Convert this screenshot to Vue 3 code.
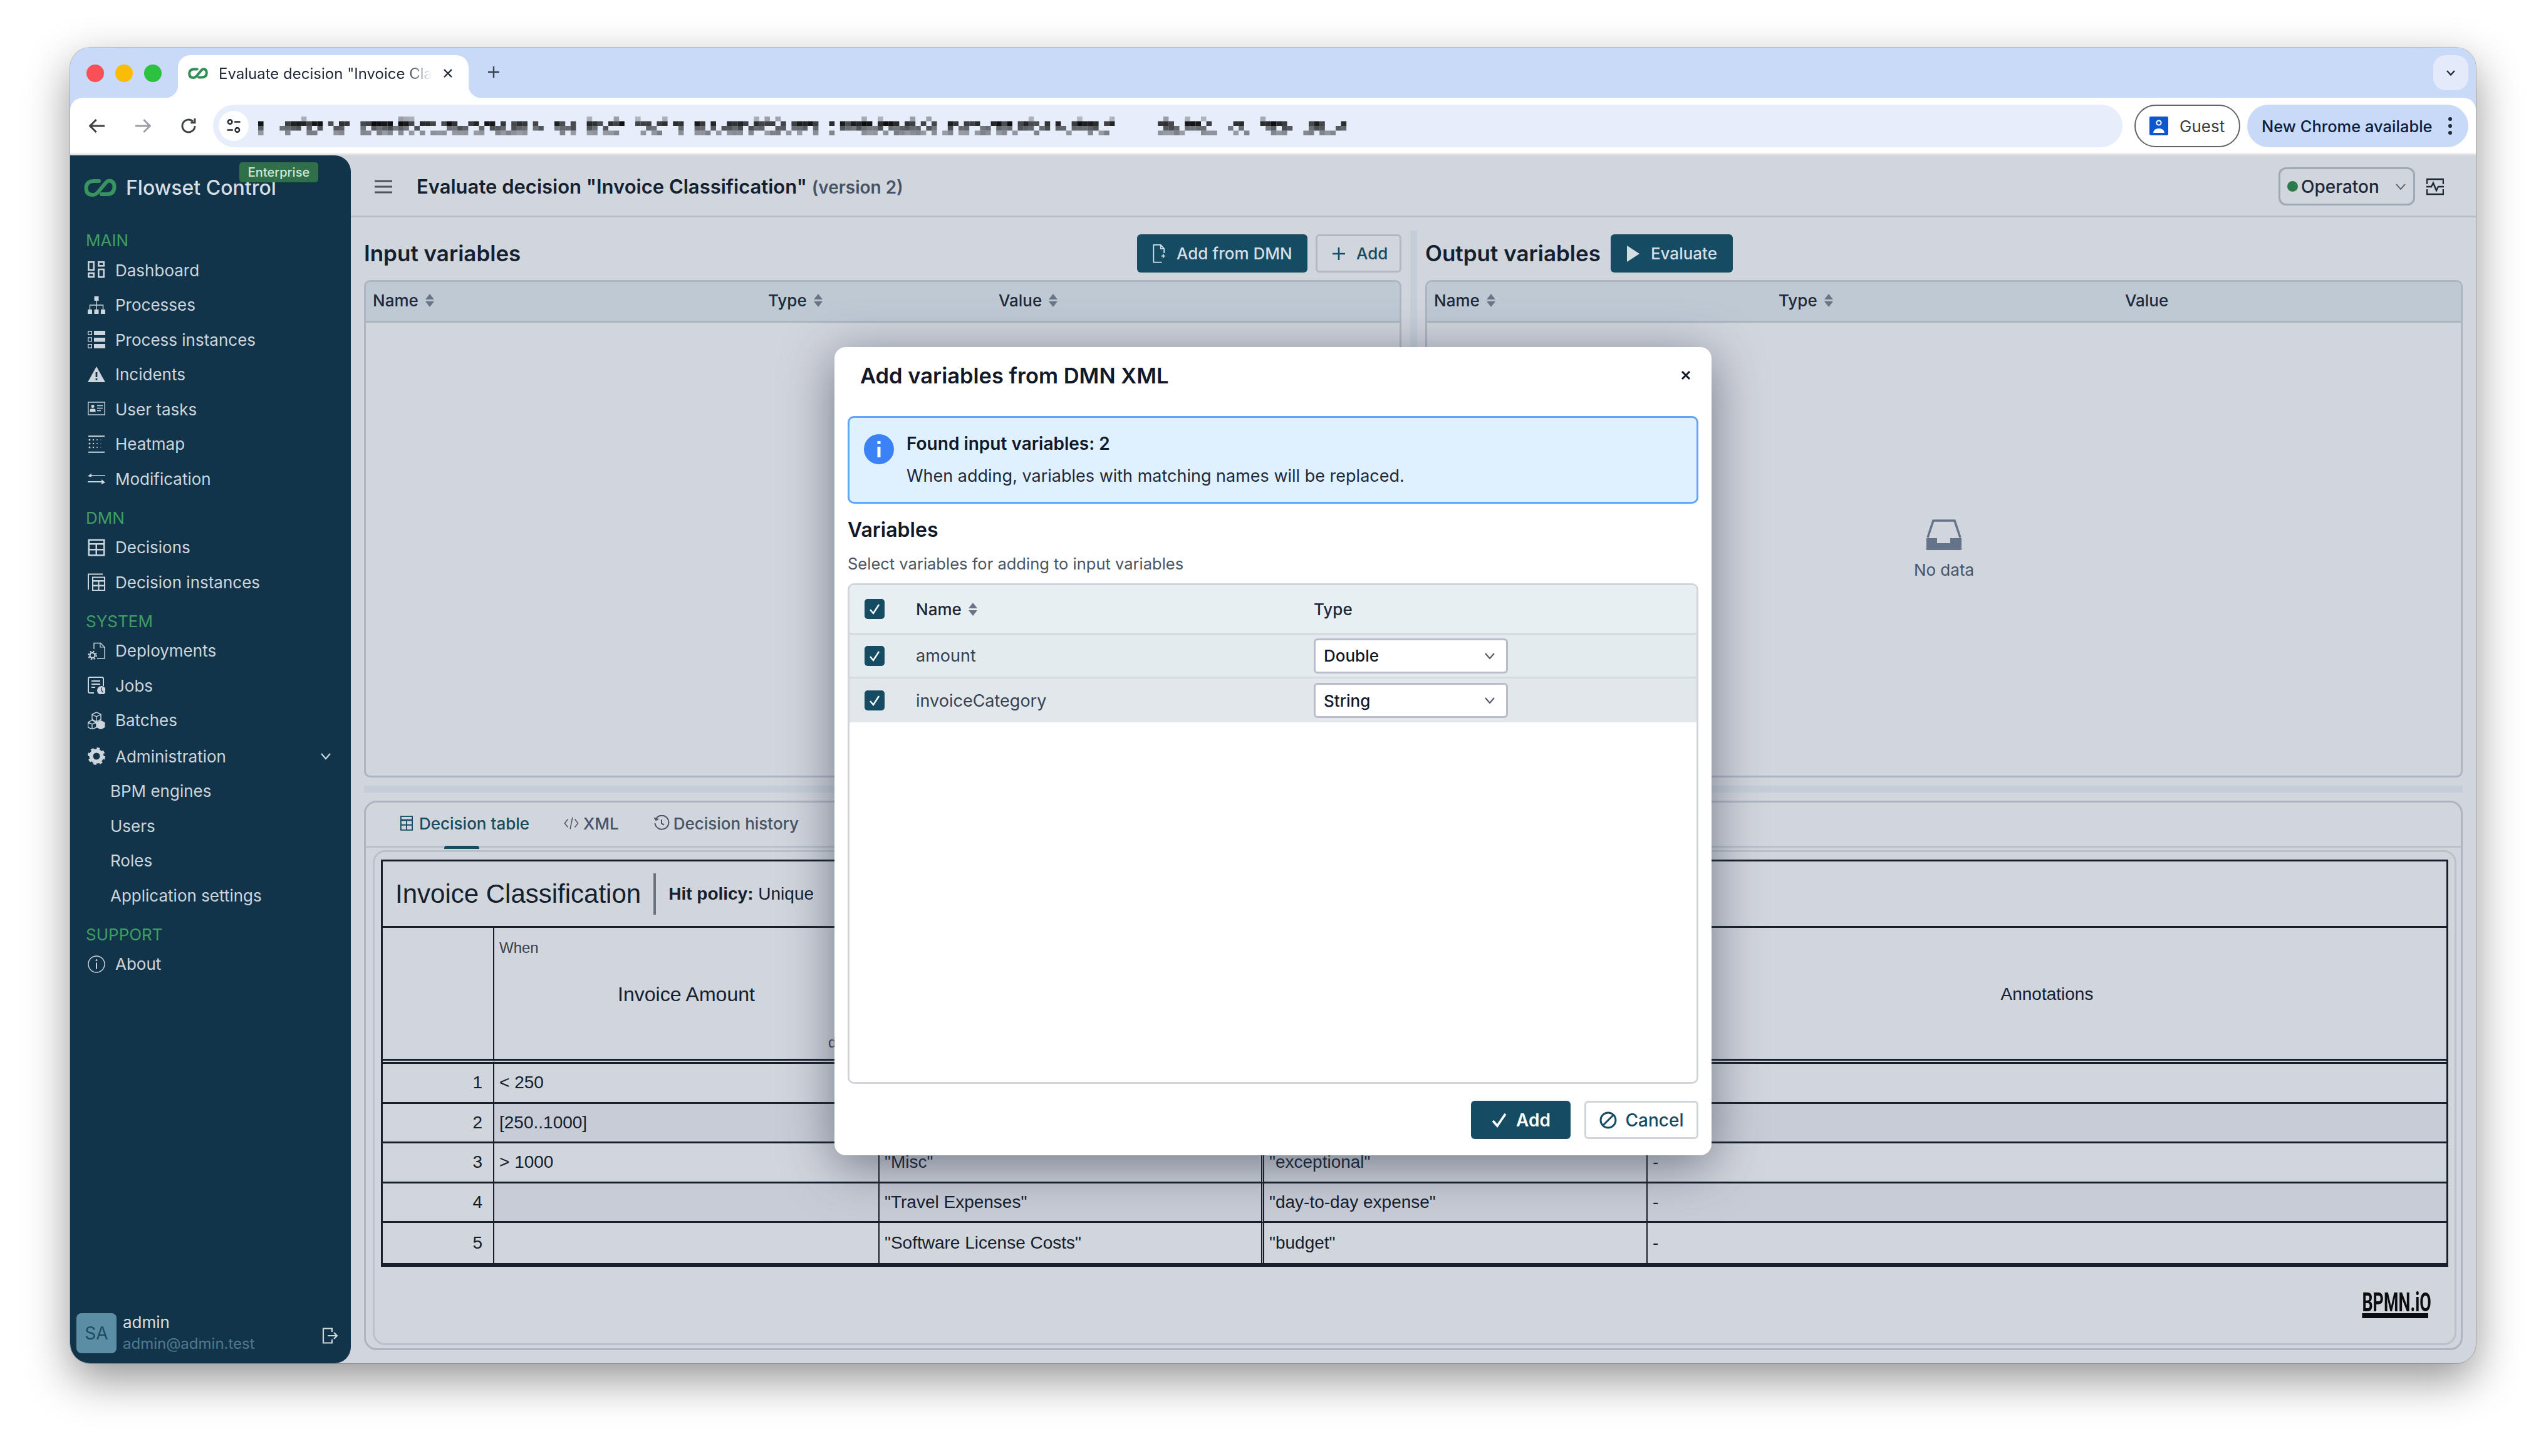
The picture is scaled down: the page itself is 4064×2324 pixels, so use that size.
<script setup>
// sidebar icons, drawn on a 28x28 box
const gearTeeth = (cx, cy, r, w) =>
  `<circle cx="${cx}" cy="${cy}" r="${r}" fill="none" stroke="currentColor" stroke-width="${w}" stroke-dasharray="${((Math.PI * 2 * r) / 16).toFixed(2)}"/>`;

const icons = {
  dashboard:
    '<g fill="none" stroke="currentColor" stroke-width="2.6"><rect x="1.3" y="1.3" width="8.4" height="12.6"/><rect x="17.3" y="1.3" width="8.4" height="6"/><rect x="1.3" y="19" width="8.4" height="6"/><rect x="17.3" y="13" width="8.4" height="12.2"/></g>',
  processes:
    '<rect x="10.5" y="0" width="7" height="7"/><rect x="0" y="21" width="7" height="7"/><rect x="10.5" y="21" width="7" height="7"/><rect x="21" y="21" width="7" height="7"/><path d="M14 7v14M3.5 21v-7h21v7" fill="none" stroke="currentColor" stroke-width="1.4"/>',
  instances:
    '<rect x="10" y="0" width="18" height="7"/><rect x="10" y="11" width="18" height="6.5"/><rect x="10" y="21" width="18" height="7"/><g fill="none" stroke="currentColor" stroke-width="1.4"><rect x=".7" y=".7" width="5.6" height="5.6"/><rect x=".7" y="11" width="5.6" height="5.6"/><rect x=".7" y="21.7" width="5.6" height="5.6"/></g>',
  incidents:
    '<path d="M14 1 28 26H0Z"/><rect x="12.6" y="10" width="2.8" height="8" fill="#12344a"/><rect x="12.6" y="20" width="2.8" height="2.8" fill="#12344a"/>',
  usertasks:
    '<rect x=".8" y="3" width="26.4" height="20" fill="none" stroke="currentColor" stroke-width="1.4"/><circle cx="8" cy="9.5" r="2.5"/><path d="M3.5 18.5v-3q0-2 2-2h5q2 0 2 2v3Z"/><path d="M15 8.5h9M15 12.5h9M15 16.5h6" fill="none" stroke="currentColor" stroke-width="1.3"/>',
  heatmap:
    '<path d="M1 1.2h26M1 26.8h26" fill="none" stroke="currentColor" stroke-width="2"/><g><circle cx="3" cy="7" r="1.5"/><circle cx="9" cy="7" r="1.2"/><circle cx="15" cy="7" r="1"/><circle cx="21" cy="7" r=".6"/><circle cx="3" cy="13" r="1.5"/><circle cx="9" cy="13" r="1.2"/><circle cx="15" cy="13" r="1"/><circle cx="21" cy="13" r=".6"/><circle cx="3" cy="19" r="1.5"/><circle cx="9" cy="19" r="1.2"/><circle cx="15" cy="19" r="1"/><circle cx="21" cy="19" r=".6"/></g>',
  modification:
    '<path d="M28 9.5H6V6.5L0 11l6 1.5V11h22ZM0 19h22v-3l6 5-6 3v-3H0Z" transform="translate(0 -1)"/>',
  decisions:
    '<path fill-rule="evenodd" d="M.5.5h27v27H.5ZM3 3v4h22V3ZM3 9.5v6.5h9.5V9.5Zm12 0v6.5h10V9.5ZM3 18.5v6.5h9.5v-6.5Zm12 0v6.5h10v-6.5Z"/>',
  decisioninstances:
    '<path d="M0 26V.5h24v2H2V26Z"/><path fill-rule="evenodd" d="M7 5.500h21V29H7Zm2 2v3.500h17V7.500Zm0 6v5h7.500v-5Zm9.500 0v5H26v-5ZM9 21v5.500h7.500V21Zm9.500 0v5.500H26V21Z"/>',
  deployments:
    '<path d="M10 11V1.500h10.500L27 8v18h-12" fill="none" stroke="currentColor" stroke-width="1.400"/><path d="M20 1.500V8h7" fill="none" stroke="currentColor" stroke-width="1.200"/>' +
    gearTeeth(7.5, 21, 6.2, 2.2) +
    '<circle cx="7.500" cy="21" r="4" fill="none" stroke="currentColor" stroke-width="2.200"/>',
  jobs:
    '<path d="M10 26H3.500Q1 26 1 23.500V3.500Q1 1 3.500 1h19Q25 1 25 3.500V15" fill="none" stroke="currentColor" stroke-width="2"/><path d="M6 7h14M6 12h14M6 17h6" fill="none" stroke="currentColor" stroke-width="2.200"/><circle cx="22" cy="22" r="7"/><path d="M22 17.500V22l2.500 3" fill="none" stroke="#12344a" stroke-width="1.300"/>',
  batches:
    '<g fill="none" stroke="currentColor" stroke-width="1.400"><path d="M14 .8l7 3.500v8l-7 3.500-7-3.500v-8ZM7 4.300l7 3.500 7-3.500M14 7.800v8"/><path d="M7 13.500l7 3.500v8l-7 3-6.500-3v-8ZM.5 17l6.500 3 7-3M7 20v8"/></g><path d="M14 17l6.500-3.500L27.500 17v8L21 28.500 14 25Z"/>',
  admin:
    gearTeeth(14, 14, 11.5, 5) +
    '<circle cx="14" cy="14" r="8.500" fill="none" stroke="currentColor" stroke-width="6"/>',
  about:
    '<circle cx="14" cy="14" r="13" fill="none" stroke="currentColor" stroke-width="1.400"/><rect x="13" y="11.500" width="2" height="10"/><circle cx="14" cy="7.500" r="1.500"/>',
};

// the chain link used for the brand and the favicon
const logoPath = "M24 5H16Q4 5 3.500 16Q3.500 27 14 27Q19 27 23 22L33 10Q37 4.500 40 4.500Q48.500 4.500 48.500 15Q48 26 36 26H28";

const sections = [
  {
    label: "MAIN",
    items: [
      { name: "Dashboard", icon: "dashboard" },
      { name: "Processes", icon: "processes" },
      { name: "Process instances", icon: "instances" },
      { name: "Incidents", icon: "incidents" },
      { name: "User tasks", icon: "usertasks" },
      { name: "Heatmap", icon: "heatmap" },
      { name: "Modification", icon: "modification" },
    ],
  },
  {
    label: "DMN",
    items: [
      { name: "Decisions", icon: "decisions" },
      { name: "Decision instances", icon: "decisioninstances" },
    ],
  },
  {
    label: "SYSTEM",
    items: [
      { name: "Deployments", icon: "deployments" },
      { name: "Jobs", icon: "jobs" },
      { name: "Batches", icon: "batches" },
      { name: "Administration", icon: "admin", open: true },
      { name: "BPM engines", sub: true },
      { name: "Users", sub: true },
      { name: "Roles", sub: true },
      { name: "Application settings", sub: true },
    ],
  },
  { label: "SUPPORT", items: [{ name: "About", icon: "about" }] },
];

const rules = [
  ["< 250", "", "", "-"],
  ["[250..1000]", "", "", "-"],
  ["> 1000", '"Misc"', '"exceptional"', "-"],
  ["", '"Travel Expenses"', '"day-to-day expense"', "-"],
  ["", '"Software License Costs"', '"budget"', "-"],
];

const variables = [
  { name: "amount", type: "Double" },
  { name: "invoiceCategory", type: "String" },
];

// masked address: pixel blocks instead of a readable url
const urlCells = [];
let seed = 4711;
const rnd = () => {
  seed = (seed * 16807) % 2147483647;
  return seed / 2147483647;
};
const rowChance = [0.14, 0.72, 0.62, 0.58];
const rowShade = [0.35, 1, 0.72, 0.5];
let gapLeft = 0;
for (let col = 0; col < 202; col++) {
  if (gapLeft > 0) {
    gapLeft--;
    continue;
  }
  if (col >= 159 && col < 167) continue;
  if (rnd() < 0.09) gapLeft = 1 + Math.floor(rnd() * 2);
  for (let row = 0; row < 4; row++) {
    if (rnd() < rowChance[row]) {
      urlCells.push({ x: col * 8.6, y: row * 7.5, o: rowShade[row] * (0.7 + rnd() * 0.3) });
    }
  }
}
</script>

<template>
  <div class="page">
    <div class="window">
      <div class="tabstrip">
        <div class="lights">
          <span class="light red"></span>
          <span class="light yellow"></span>
          <span class="light green"></span>
        </div>
        <div class="tab">
          <svg class="favicon" viewBox="0 0 52 31">
            <path :d="logoPath" fill="none" stroke="#2f8f57" stroke-width="6.500" stroke-linecap="round" />
          </svg>
          <span class="tab-title">Evaluate decision "Invoice Cla</span>
          <svg class="tab-close" viewBox="0 0 20 20"><path d="M4 4 16 16M16 4 4 16" stroke="#1f2937" stroke-width="2.400" /></svg>
        </div>
        <svg class="tab-plus" viewBox="0 0 24 24"><path d="M12 3v18M3 12h18" stroke="#374151" stroke-width="2.400" /></svg>
        <div class="tab-list">
          <svg viewBox="0 0 20 20" width="20" height="20"><path d="M4 7l6 6.500L16 7" fill="none" stroke="#1f2937" stroke-width="2.400" /></svg>
        </div>
      </div>

      <div class="toolbar">
        <svg class="nav-btn" viewBox="0 0 24 24"><path d="M21 12H4M11 4.500 3.500 12l7.500 7.500" fill="none" stroke="#3c4043" stroke-width="2.200" /></svg>
        <svg class="nav-btn" viewBox="0 0 24 24"><path d="M3 12h17M13 4.500l7.500 7.500-7.500 7.500" fill="none" stroke="#9aa0a6" stroke-width="2.200" /></svg>
        <svg class="nav-btn" viewBox="0 0 24 24"><path d="M19.500 12a7.500 7.500 0 1 1-2.300-5.400M19.500 3v5h-5" fill="none" stroke="#3c4043" stroke-width="2.200" /></svg>
        <div class="address">
          <span class="site-info">
            <svg viewBox="0 0 24 24" width="28" height="28">
              <g fill="none" stroke="#2b2f33" stroke-width="2.200">
                <circle cx="7" cy="6.500" r="2.800" /><path d="M13 6.500h8M3 17.500h8" /><circle cx="17" cy="17.500" r="2.800" />
              </g>
            </svg>
          </span>
          <svg class="url-mask" width="1742" height="30" viewBox="0 0 1742 30">
            <rect v-for="(c, i) in urlCells" :key="i" :x="c.x" :y="c.y" width="8.600" height="7.500" fill="#0b0b0b" :fill-opacity="c.o" />
          </svg>
        </div>
        <div class="guest">
          <svg viewBox="0 0 30 30" width="30" height="30">
            <rect width="30" height="30" rx="2" fill="#0b57d0" />
            <circle cx="15" cy="10" r="3.600" fill="none" stroke="#fff" stroke-width="2" />
            <path d="M6 26q1-7 9-7t9 7Z" fill="#fff" />
          </svg>
          <span>Guest</span>
        </div>
        <div class="update">
          <span>New Chrome available</span>
          <svg viewBox="0 0 8 30" width="8" height="30"><circle cx="4" cy="4" r="3" /><circle cx="4" cy="15" r="3" /><circle cx="4" cy="26" r="3" /></svg>
        </div>
      </div>

      <div class="app">
        <aside class="sidebar">
          <div class="brand">
            <svg class="brand-logo" viewBox="0 0 52 31">
              <path :d="logoPath" fill="none" stroke="#38955d" stroke-width="6" stroke-linecap="round" />
            </svg>
            <span class="brand-name">Flowset Control</span>
            <span class="badge">Enterprise</span>
          </div>
          <template v-for="section in sections" :key="section.label">
            <div class="nav-label">{{ section.label }}</div>
            <div
              v-for="item in section.items"
              :key="item.name"
              class="nav-item"
              :class="{ 'nav-sub': item.sub, 'nav-open': item.open }"
            >
              <svg v-if="item.icon" class="nav-icon" viewBox="0 0 28 28" fill="currentColor" v-html="icons[item.icon]"></svg>
              <span>{{ item.name }}</span>
              <svg v-if="item.open" class="nav-chevron" viewBox="0 0 20 20" width="20" height="20">
                <path d="M3 6l7 8 7-8" fill="none" stroke="#cdd5dc" stroke-width="2.200" />
              </svg>
            </div>
          </template>
          <div class="user">
            <div class="avatar">SA</div>
            <div class="user-text">
              <div class="user-name">admin</div>
              <div class="user-mail">admin@admin.test</div>
            </div>
            <svg class="logout" viewBox="0 0 26 28" width="26" height="28">
              <path d="M16 8V2.500H2V25.500H16V20M9 14H24M19 9l5 5-5 5" fill="none" stroke="#cdd5dc" stroke-width="2.200" />
            </svg>
          </div>
        </aside>

        <main class="main">
          <header class="topbar">
            <svg class="burger" viewBox="0 0 28 24" width="28" height="24"><path d="M0 3h28M0 12h28M0 21h28" stroke="#4b5563" stroke-width="3" /></svg>
            <h1 class="page-title">Evaluate decision "Invoice Classification" <small>(version 2)</small></h1>
            <div class="engine">
              <span class="engine-dot"></span>
              <span class="engine-name">Operaton</span>
              <svg viewBox="0 0 20 20" width="20" height="20"><path d="M3 6l7 8 7-8" fill="none" stroke="#4b5563" stroke-width="1.800" /></svg>
            </div>
            <svg class="engine-status" viewBox="0 0 28 28" width="28" height="28">
              <path d="M1 10V2h26v8M1 18v8h26v-8M0 14h8l3-6 5 12 3-6h9" fill="none" stroke="#1f2937" stroke-width="2.400" />
            </svg>
          </header>

          <div class="workspace">
            <div class="top-panes">
              <section class="pane">
                <div class="pane-head">
                  <h2 class="pane-title">Input variables</h2>
                  <div class="spacer"></div>
                  <button class="btn btn-solid">
                    <svg viewBox="0 0 22 34" width="20" height="32"><path d="M20 16V8L14 1.500H1.500V32H16M14 1.500V8H20M15 21h7M18.500 17.500v7" fill="none" stroke="#d6dee3" stroke-width="2" /></svg>
                    Add from DMN
                  </button>
                  <button class="btn btn-line">
                    <svg viewBox="0 0 20 20" width="20" height="20"><path d="M10 0v20M0 10h20" stroke="#164c63" stroke-width="2.600" /></svg>
                    Add
                  </button>
                </div>
                <div class="data-table">
                  <div class="data-head cols-input">
                    <span class="th">Name <i class="sort"></i></span>
                    <span class="th">Type <i class="sort"></i></span>
                    <span class="th">Value <i class="sort"></i></span>
                  </div>
                </div>
              </section>
              <div class="vsplit"></div>
              <section class="pane">
                <div class="pane-head">
                  <h2 class="pane-title">Output variables</h2>
                  <button class="btn btn-solid btn-eval">
                    <svg viewBox="0 0 20 26" width="20" height="26"><path d="M0 0 20 13 0 26Z" fill="#d6dee3" /></svg>
                    Evaluate
                  </button>
                </div>
                <div class="data-table">
                  <div class="data-head cols-output">
                    <span class="th">Name <i class="sort"></i></span>
                    <span class="th">Type <i class="sort"></i></span>
                    <span class="th">Value</span>
                  </div>
                  <div class="empty">
                    <svg viewBox="0 0 56 49" width="56" height="49"><path d="M2 29 11 2H45L54 29" fill="none" stroke="#64738a" stroke-width="3.500" /><path d="M0 30H17V38H38V30H56V49H0Z" fill="#64738a" /></svg>
                    <span>No data</span>
                  </div>
                </div>
              </section>
            </div>

            <div class="hsplit"></div>

            <section class="bottom-pane">
              <nav class="tabs">
                <span class="tab-link active">
                  <svg viewBox="0 0 22 26" width="20" height="24"><path fill-rule="evenodd" fill="#164c63" d="M0 0h22v26H0Zm2 2v4h18V2Zm0 7v6h8V9Zm10 0v6h8V9ZM2 17v7h8v-7Zm10 0v7h8v-7Z" /></svg>
                  Decision table
                  <i class="tab-mark"></i>
                </span>
                <span class="tab-link xml-link">
                  <svg viewBox="0 0 26 24" width="24" height="24"><path d="M7 5 1.500 12 7 19M19 5l5.500 7L19 19M15 2l-4 20" fill="none" stroke="#4b5563" stroke-width="1.600" /></svg>
                  XML
                </span>
                <span class="tab-link hist-link">
                  <svg viewBox="0 0 26 26" width="26" height="26"><path d="M4 6A11 11 0 1 1 2.500 13M1.500 4 4 8l4-2M13 7v6.500l4 2" fill="none" stroke="#4b5563" stroke-width="2" /></svg>
                  Decision history
                </span>
              </nav>
              <div class="canvas">
                <div class="dmn">
                  <div class="dmn-title">
                    <span class="dmn-name">Invoice Classification</span>
                    <span class="dmn-policy"><b>Hit policy:</b> Unique</span>
                  </div>
                  <table class="dmn-table">
                    <colgroup>
                      <col class="c-num" /><col class="c-in" /><col class="c-out" /><col class="c-out2" /><col />
                    </colgroup>
                    <thead>
                      <tr>
                        <th></th>
                        <th class="head-cell">
                          <span class="clause">When</span>
                          <span class="clause-name">Invoice Amount</span>
                          <span class="clause-type">double</span>
                        </th>
                        <th class="head-cell"></th>
                        <th class="head-cell"></th>
                        <th class="head-cell last"><span class="clause-name">Annotations</span></th>
                      </tr>
                    </thead>
                    <tbody>
                      <tr v-for="(row, idx) in rules" :key="idx">
                        <td class="num">{{ idx + 1 }}</td>
                        <td v-for="(cell, c) in row" :key="c">{{ cell }}</td>
                      </tr>
                    </tbody>
                  </table>
                </div>
                <div class="canvas-foot">
                  <span class="powered">BPMN.iO</span>
                </div>
              </div>
            </section>
          </div>
        </main>

        <div class="modal">
          <div class="modal-head">
            <h3>Add variables from DMN XML</h3>
            <svg viewBox="0 0 20 20" width="20" height="20"><path d="M4 4 16 16M16 4 4 16" stroke="#111827" stroke-width="3" /></svg>
          </div>
          <div class="alert">
            <svg class="alert-icon" viewBox="0 0 48 48" width="48" height="48">
              <circle cx="24" cy="24" r="24" fill="#3b82f6" />
              <rect x="21.500" y="20" width="5" height="17" fill="#fff" />
              <rect x="21.500" y="11" width="5" height="5" fill="#fff" />
            </svg>
            <div>
              <div class="alert-title">Found input variables: 2</div>
              <div class="alert-text">When adding, variables with matching names will be replaced.</div>
            </div>
          </div>
          <h4 class="vars-title">Variables</h4>
          <p class="vars-sub">Select variables for adding to input variables</p>
          <div class="pick-table">
            <div class="pick-row pick-head">
              <span class="check"><svg viewBox="0 0 32 32"><path d="M9 17l5 6 9-14" fill="none" stroke="#fff" stroke-width="2.400" /></svg></span>
              <span class="pick-th">Name <i class="sort"></i></span>
              <span class="pick-th">Type</span>
            </div>
            <div v-for="(v, i) in variables" :key="v.name" class="pick-row" :class="i ? 'row-b' : 'row-a'">
              <span class="check"><svg viewBox="0 0 32 32"><path d="M9 17l5 6 9-14" fill="none" stroke="#fff" stroke-width="2.400" /></svg></span>
              <span class="pick-name">{{ v.name }}</span>
              <span class="select">
                {{ v.type }}
                <svg viewBox="0 0 20 20" width="20" height="20"><path d="M3 6l7 8 7-8" fill="none" stroke="#4b5563" stroke-width="2" /></svg>
              </span>
            </div>
          </div>
          <div class="modal-foot">
            <button class="btn-modal btn-add">
              <svg viewBox="0 0 26 26" width="26" height="26"><path d="M3 14l7 8L23 3" fill="none" stroke="#fff" stroke-width="3.600" /></svg>
              Add
            </button>
            <button class="btn-modal btn-cancel">
              <svg viewBox="0 0 28 28" width="28" height="28"><circle cx="14" cy="14" r="12" fill="none" stroke="#164c63" stroke-width="3" /><path d="M6 22 22 6" stroke="#164c63" stroke-width="3" /></svg>
              Cancel
            </button>
          </div>
        </div>
      </div>
    </div>
  </div>
</template>

<style scoped>
* {
  box-sizing: border-box;
}

.page {
  width: 4064px;
  height: 2324px;
  padding: 76px 0 0 112px;
  background: #fff;
  overflow: hidden;
  font-family: Inter, "Noto Sans", sans-serif;
  color: #111827;
}

.window {
  position: relative;
  width: 3840px;
  height: 2100px;
  border-radius: 32px;
  overflow: hidden;
  background: #c9daf9;
  display: flex;
  flex-direction: column;
  box-shadow: 0 26px 70px rgba(0, 0, 0, 0.42), 0 0 0 1px rgba(0, 0, 0, 0.2);
}

/* browser chrome */
.tabstrip {
  height: 80px;
  flex: none;
  display: flex;
  align-items: flex-end;
  background: #c9daf9;
}

.lights {
  display: flex;
  gap: 18px;
  padding-left: 26px;
  width: 172px;
  align-self: flex-start;
  margin-top: 27px;
}

.light {
  width: 28px;
  height: 28px;
  border-radius: 50%;
}

.red { background: #f94f57; }
.yellow { background: #fbbc05; }
.green { background: #2cc240; }

.tab {
  position: relative;
  width: 464px;
  height: 68px;
  background: #fff;
  border-radius: 20px 20px 0 0;
  display: flex;
  align-items: center;
  padding-left: 16px;
  padding-bottom: 10px;
}

.tab::before,
.tab::after {
  content: "";
  position: absolute;
  bottom: 0;
  width: 20px;
  height: 20px;
}

.tab::before {
  left: -20px;
  background: radial-gradient(circle at 0 0, transparent 20px, #fff 20.500px);
}

.tab::after {
  right: -20px;
  background: radial-gradient(circle at 100% 0, transparent 20px, #fff 20.500px);
}

.favicon {
  width: 32px;
  height: 24px;
  flex: none;
}

.tab-title {
  width: 340px;
  margin-left: 17px;
  font-size: 24px;
  white-space: nowrap;
  color: #1f2937;
  -webkit-mask-image: linear-gradient(90deg, #000 88%, transparent);
  mask-image: linear-gradient(90deg, #000 88%, transparent);
}

.tab-close {
  width: 20px;
  height: 20px;
  margin-left: 16px;
}

.tab-plus {
  width: 24px;
  height: 24px;
  margin: 0 0 29px 28px;
}

.tab-list {
  margin: 0 12px 12px auto;
  width: 56px;
  height: 56px;
  border-radius: 20px;
  background: #e3ebfb;
  display: flex;
  align-items: center;
  justify-content: center;
}

.toolbar {
  height: 92px;
  flex: none;
  background: #fff;
  border-radius: 20px 20px 0 0;
  border-bottom: 3px solid #dee0e2;
  display: flex;
  align-items: center;
  padding: 1px 12px 0 27px;
}

.nav-btn {
  width: 32px;
  height: 32px;
  flex: none;
  margin-right: 41px;
}

.nav-btn:nth-child(3) {
  margin-right: 23px;
}

.address {
  width: 3048px;
  height: 68px;
  border-radius: 34px;
  background: #e7eefb;
  display: flex;
  align-items: center;
  padding-left: 9px;
}

.site-info {
  width: 48px;
  height: 48px;
  border-radius: 50%;
  background: #fff;
  display: flex;
  align-items: center;
  justify-content: center;
}

.url-mask {
  margin-left: 15px;
  filter: blur(0.4px);
}

.guest {
  margin-left: 19px;
  width: 169px;
  height: 68px;
  border: 2.500px solid #5f6368;
  border-radius: 34px;
  display: flex;
  align-items: center;
  gap: 18px;
  padding-left: 22px;
  font-size: 26px;
  color: #3c4043;
}

.update {
  margin-left: 11px;
  width: 353px;
  height: 68px;
  border-radius: 34px;
  background: #c9daf9;
  display: flex;
  align-items: center;
  padding-left: 23px;
  gap: 24px;
  font-size: 25.500px;
  font-weight: 500;
  color: #0c1e3e;
  white-space: nowrap;
}

.update svg {
  fill: #1f2937;
}

/* app shell */
.app {
  position: relative;
  flex: 1;
  display: flex;
  min-height: 0;
  background: #d1d5dc;
}

.sidebar {
  width: 448px;
  flex: none;
  background: #12344a;
  border-radius: 0 26px 26px 0;
  display: flex;
  flex-direction: column;
  color: #cdd5dc;
}

.brand {
  position: relative;
  height: 102px;
  flex: none;
  display: flex;
  align-items: center;
  padding-left: 22px;
}

.brand-logo {
  width: 52px;
  height: 31px;
}

.brand-name {
  margin-left: 15px;
  font-size: 32px;
  font-weight: 500;
  color: #d6dde3;
}

.badge {
  position: absolute;
  left: 270px;
  top: 11px;
  height: 32px;
  width: 126px;
  border-radius: 5px;
  background: #2f7048;
  color: #d6e5db;
  font-size: 20px;
  font-weight: 500;
  display: flex;
  align-items: center;
  justify-content: center;
}

.nav-label {
  height: 40px;
  flex: none;
  margin-top: 14px;
  padding-left: 25px;
  font-size: 26px;
  line-height: 40px;
  color: #3f9f62;
}

.nav-item {
  height: 55.500px;
  flex: none;
  display: flex;
  align-items: center;
  padding-left: 28px;
  padding-bottom: 1px;
  font-size: 26px;
}

.nav-icon {
  width: 28px;
  height: 28px;
  margin-right: 16px;
  flex: none;
}

.nav-sub {
  padding-left: 64px;
}

.nav-open {
  margin-top: 2px;
}

.nav-chevron {
  margin-left: auto;
  margin-right: 30px;
}

.user {
  margin-top: auto;
  display: flex;
  align-items: center;
  padding: 0 20px 14px 10px;
}

.avatar {
  width: 64px;
  height: 64px;
  border-radius: 8px;
  background: #5b8ea4;
  color: #1f4d63;
  font-size: 28px;
  display: flex;
  align-items: center;
  justify-content: center;
}

.user-text {
  margin-left: 10px;
}

.user-name {
  font-size: 26px;
  line-height: 34px;
  color: #d6dde3;
}

.user-mail {
  font-size: 24px;
  line-height: 34px;
  color: #50798e;
}

.logout {
  margin-left: auto;
  margin-top: 8px;
}

.main {
  flex: 1;
  min-width: 0;
  display: flex;
  flex-direction: column;
}

.topbar {
  height: 99px;
  flex: none;
  border-bottom: 3px solid #b9c0cc;
  display: flex;
  align-items: center;
  padding: 3px 51px 0 38px;
}

.page-title {
  margin: 0 0 0 39px;
  font-size: 31px;
  font-weight: 600;
  color: #14202f;
}

.page-title small {
  font-size: 28px;
  font-weight: 600;
  color: #465366;
}

.engine {
  margin-left: auto;
  width: 218px;
  height: 61px;
  border: 3px solid #9ea9b7;
  border-radius: 12px;
  display: flex;
  align-items: center;
  padding-left: 11px;
}

.engine-dot {
  width: 17px;
  height: 17px;
  border-radius: 50%;
  background: #2b7a4a;
}

.engine-name {
  margin: 0 24px 0 5px;
  font-size: 28px;
  font-weight: 500;
  color: #1e293b;
}

.engine-status {
  margin-left: 18px;
}

.workspace {
  flex: 1;
  min-height: 0;
  padding: 21px;
  display: flex;
  flex-direction: column;
}

.top-panes {
  height: 873px;
  flex: none;
  display: flex;
}

.pane {
  width: 1656px;
  flex: none;
  display: flex;
  flex-direction: column;
}

.vsplit {
  width: 11px;
  margin: 0 13px 0 14px;
  background: #c5ced8;
}

.pane-head {
  height: 79px;
  flex: none;
  display: flex;
  align-items: flex-start;
  padding-top: 6px;
}

.pane-title {
  margin: 0;
  font-size: 35px;
  line-height: 61px;
  font-weight: 600;
  color: #14202f;
}

.spacer {
  flex: 1;
}

.btn {
  height: 61px;
  border-radius: 6px;
  display: flex;
  align-items: center;
  font-family: inherit;
  font-size: 26px;
  font-weight: 500;
  padding: 0;
  border: none;
}

.btn-solid {
  width: 272px;
  background: #164c63;
  color: #d6dee3;
  gap: 18px;
  padding-left: 25px;
}

.btn-line {
  width: 137px;
  margin-left: 13px;
  background: transparent;
  border: 3px solid #b1b8c4;
  color: #164c63;
  gap: 18px;
  padding-left: 24px;
}

.btn-eval {
  width: 195px;
  margin-left: 16px;
  padding-left: 26px;
  gap: 18px;
}

.data-table {
  flex: 1;
  border: 3px solid #aeb5c2;
  border-radius: 10px;
  display: flex;
  flex-direction: column;
}

.data-head {
  height: 65px;
  flex: none;
  background: #bec9d4;
  border-bottom: 3px solid #a9b4c2;
  display: grid;
  align-items: center;
  border-radius: 7px 7px 0 0;
  padding-bottom: 4px;
}

.cols-input {
  grid-template-columns: 631px 368px 1fr;
  padding-left: 11px;
}

.cols-output {
  grid-template-columns: 550px 553px 1fr;
  padding-left: 11px;
}

.th {
  font-size: 26px;
  font-weight: 500;
  color: #1e293b;
  display: flex;
  align-items: center;
  gap: 11px;
}

.sort {
  display: inline-flex;
  flex-direction: column;
  gap: 3px;
}

.sort::before,
.sort::after {
  content: "";
  border-left: 7px solid transparent;
  border-right: 7px solid transparent;
}

.sort::before {
  border-bottom: 9px solid #697587;
}

.sort::after {
  border-top: 9px solid #697587;
}

.empty {
  flex: 1;
  display: flex;
  flex-direction: column;
  align-items: center;
  justify-content: center;
  gap: 16px;
  font-size: 26px;
  color: #46546a;
}

.hsplit {
  height: 11px;
  flex: none;
  margin: 13px 0;
  background: #c5ced8;
}

.bottom-pane {
  flex: 1;
  min-height: 0;
  border: 3px solid #aeb5c2;
  border-radius: 20px;
  display: flex;
  flex-direction: column;
  padding-bottom: 5px;
}

.tabs {
  height: 72px;
  flex: none;
  border-bottom: 3px solid #b9c0cc;
  display: flex;
  align-items: center;
  padding: 0 0 3px 55px;
}

.tab-link {
  position: relative;
  display: flex;
  align-items: center;
  gap: 10px;
  font-size: 26px;
  font-weight: 500;
  color: #465366;
}

.tab-link.active {
  color: #164c63;
}

.tab-mark {
  position: absolute;
  left: 70px;
  bottom: -25px;
  width: 56px;
  height: 5px;
  border-radius: 4px 4px 0 0;
  background: #164c63;
}

.xml-link {
  margin-left: 55px;
  gap: 7px;
}

.hist-link {
  margin-left: 55px;
  gap: 6px;
}

.canvas {
  flex: 1;
  min-height: 0;
  margin: 4px 7px 0 11px;
  border: 3px solid #bbc1cc;
  border-radius: 20px;
  padding: 12px 10px 0;
  display: flex;
  flex-direction: column;
}

.dmn {
  border: 3px solid #171f2b;
  border-bottom-width: 6px;
  font-family: "Liberation Sans", Arial, sans-serif;
  color: #14202f;
}

.dmn-title {
  height: 106px;
  border-bottom: 3px solid #171f2b;
  display: flex;
  align-items: center;
  padding-left: 20px;
}

.dmn-name {
  font-size: 42px;
  padding-right: 20px;
  border-right: 4px solid #6b7280;
  line-height: 66px;
}

.dmn-policy {
  margin-left: 20px;
  font-size: 28px;
}

.dmn-table {
  width: 100%;
  table-layout: fixed;
  border-collapse: separate;
  border-spacing: 0;
  font-size: 28px;
}

.c-num { width: 178px; }
.c-in { width: 615px; }
.c-out { width: 614px; }
.c-out2 { width: 612px; }

.dmn-table th {
  height: 217px;
  padding: 3px 0 0;
  font-weight: 400;
  border-right: 2.500px solid #171f2b;
  border-bottom: 8px double #171f2b;
  position: relative;
}

.dmn-table th:last-child,
.dmn-table td:last-child {
  border-right: none;
}

.dmn-table th:nth-child(3),
.dmn-table td:nth-child(3) {
  border-right: 5px double #171f2b;
}

.clause {
  position: absolute;
  left: 8px;
  top: 18px;
  font-size: 24px;
  color: #374151;
}

.clause-name {
  font-size: 32px;
}

.head-cell.last .clause-name {
  font-size: 28px;
}

.clause-type {
  position: absolute;
  right: 8px;
  bottom: 12px;
  font-size: 24px;
  color: #374151;
}

.dmn-table td {
  height: 63.500px;
  padding: 0 8px;
  border-right: 2.500px solid #171f2b;
  border-bottom: 3px solid #171f2b;
  white-space: nowrap;
}

.dmn-table tr:last-child td {
  border-bottom: none;
}

.dmn-table tr:nth-child(even) td:not(.num) {
  background: #c8ccd6;
}

.dmn-table .num {
  text-align: right;
  padding-right: 17px;
}

.canvas-foot {
  display: flex;
  justify-content: flex-end;
  padding: 40px 0 0;
}

.powered {
  display: block;
  width: 165px;
  font-family: Roboto, sans-serif;
  font-weight: 700;
  font-size: 42px;
  line-height: 34px;
  text-align: center;
  color: #0b0d10;
  border-bottom: 8px solid #0b0d10;
  transform: scaleX(0.64);
  transform-origin: 100% 50%;
  margin-right: 32px;
}

/* dialog */
.modal {
  position: absolute;
  left: 1220px;
  top: 306px;
  width: 1400px;
  height: 1290px;
  background: #fff;
  border-radius: 18px;
  padding: 0 21px;
  display: flex;
  flex-direction: column;
  box-shadow: 0 16px 80px rgba(50, 60, 80, 0.6);
}

.modal-head {
  height: 110px;
  flex: none;
  display: flex;
  align-items: center;
  justify-content: space-between;
  padding: 0 10px 20px 20px;
}

.modal-head h3 {
  margin: 0;
  font-size: 34.500px;
  font-weight: 600;
  color: #111827;
}

.alert {
  height: 140px;
  flex: none;
  display: flex;
  gap: 20px;
  padding: 21px 23px 0;
  background: #dff0ff;
  border: 3px solid #60a5fa;
  border-radius: 10px;
}

.alert-icon {
  margin-top: 5px;
  flex: none;
}

.alert-title {
  font-size: 28px;
  line-height: 40px;
  font-weight: 600;
  color: #111827;
}

.alert-text {
  margin-top: 12px;
  font-size: 27px;
  line-height: 40px;
  color: #1f2937;
}

.vars-title {
  margin: 20px 0 0;
  font-size: 32px;
  line-height: 44px;
  font-weight: 600;
  color: #111827;
}

.vars-sub {
  margin: 14px 0 13px;
  font-size: 25.500px;
  line-height: 36px;
  color: #4b5563;
}

.pick-table {
  height: 799px;
  flex: none;
  border: 3px solid #d1d5db;
  border-radius: 10px;
}

.pick-row {
  display: grid;
  grid-template-columns: 82px 635px 1fr;
  align-items: center;
  padding-left: 24px;
  height: 70px;
  border-bottom: 3px solid #d5dbe0;
}

.pick-head {
  height: 79px;
  background: #e8eff3;
  border-radius: 7px 7px 0 0;
}

.row-a { background: #e4ebef; }
.row-b { background: #e1e7eb; border-bottom: none; }

.check {
  width: 32px;
  height: 32px;
  border-radius: 5px;
  background: #164c63;
  display: block;
}

.check svg {
  display: block;
  width: 32px;
  height: 32px;
}

.pick-th {
  font-size: 26px;
  font-weight: 500;
  color: #1f2937;
  display: flex;
  align-items: center;
  gap: 11px;
}

.pick-name {
  font-size: 27px;
  color: #374151;
}

.select {
  width: 310px;
  height: 56px;
  background: #fff;
  border: 3px solid #b8bdc9;
  border-radius: 6px;
  display: flex;
  align-items: center;
  justify-content: space-between;
  padding: 0 16px 0 13px;
  font-size: 26px;
  font-weight: 500;
  color: #111827;
}

.modal-foot {
  display: flex;
  justify-content: flex-end;
  gap: 22px;
  margin-top: 27px;
}

.btn-modal {
  height: 61px;
  border-radius: 6px;
  font-family: inherit;
  font-size: 28px;
  font-weight: 600;
  display: flex;
  align-items: center;
  justify-content: center;
  gap: 14px;
  padding: 0;
}

.btn-add {
  width: 159px;
  background: #164c63;
  border: none;
  color: #fff;
}

.btn-cancel {
  width: 182px;
  background: #fff;
  border: 3px solid #d1d5db;
  color: #164c63;
  font-weight: 500;
}
</style>
